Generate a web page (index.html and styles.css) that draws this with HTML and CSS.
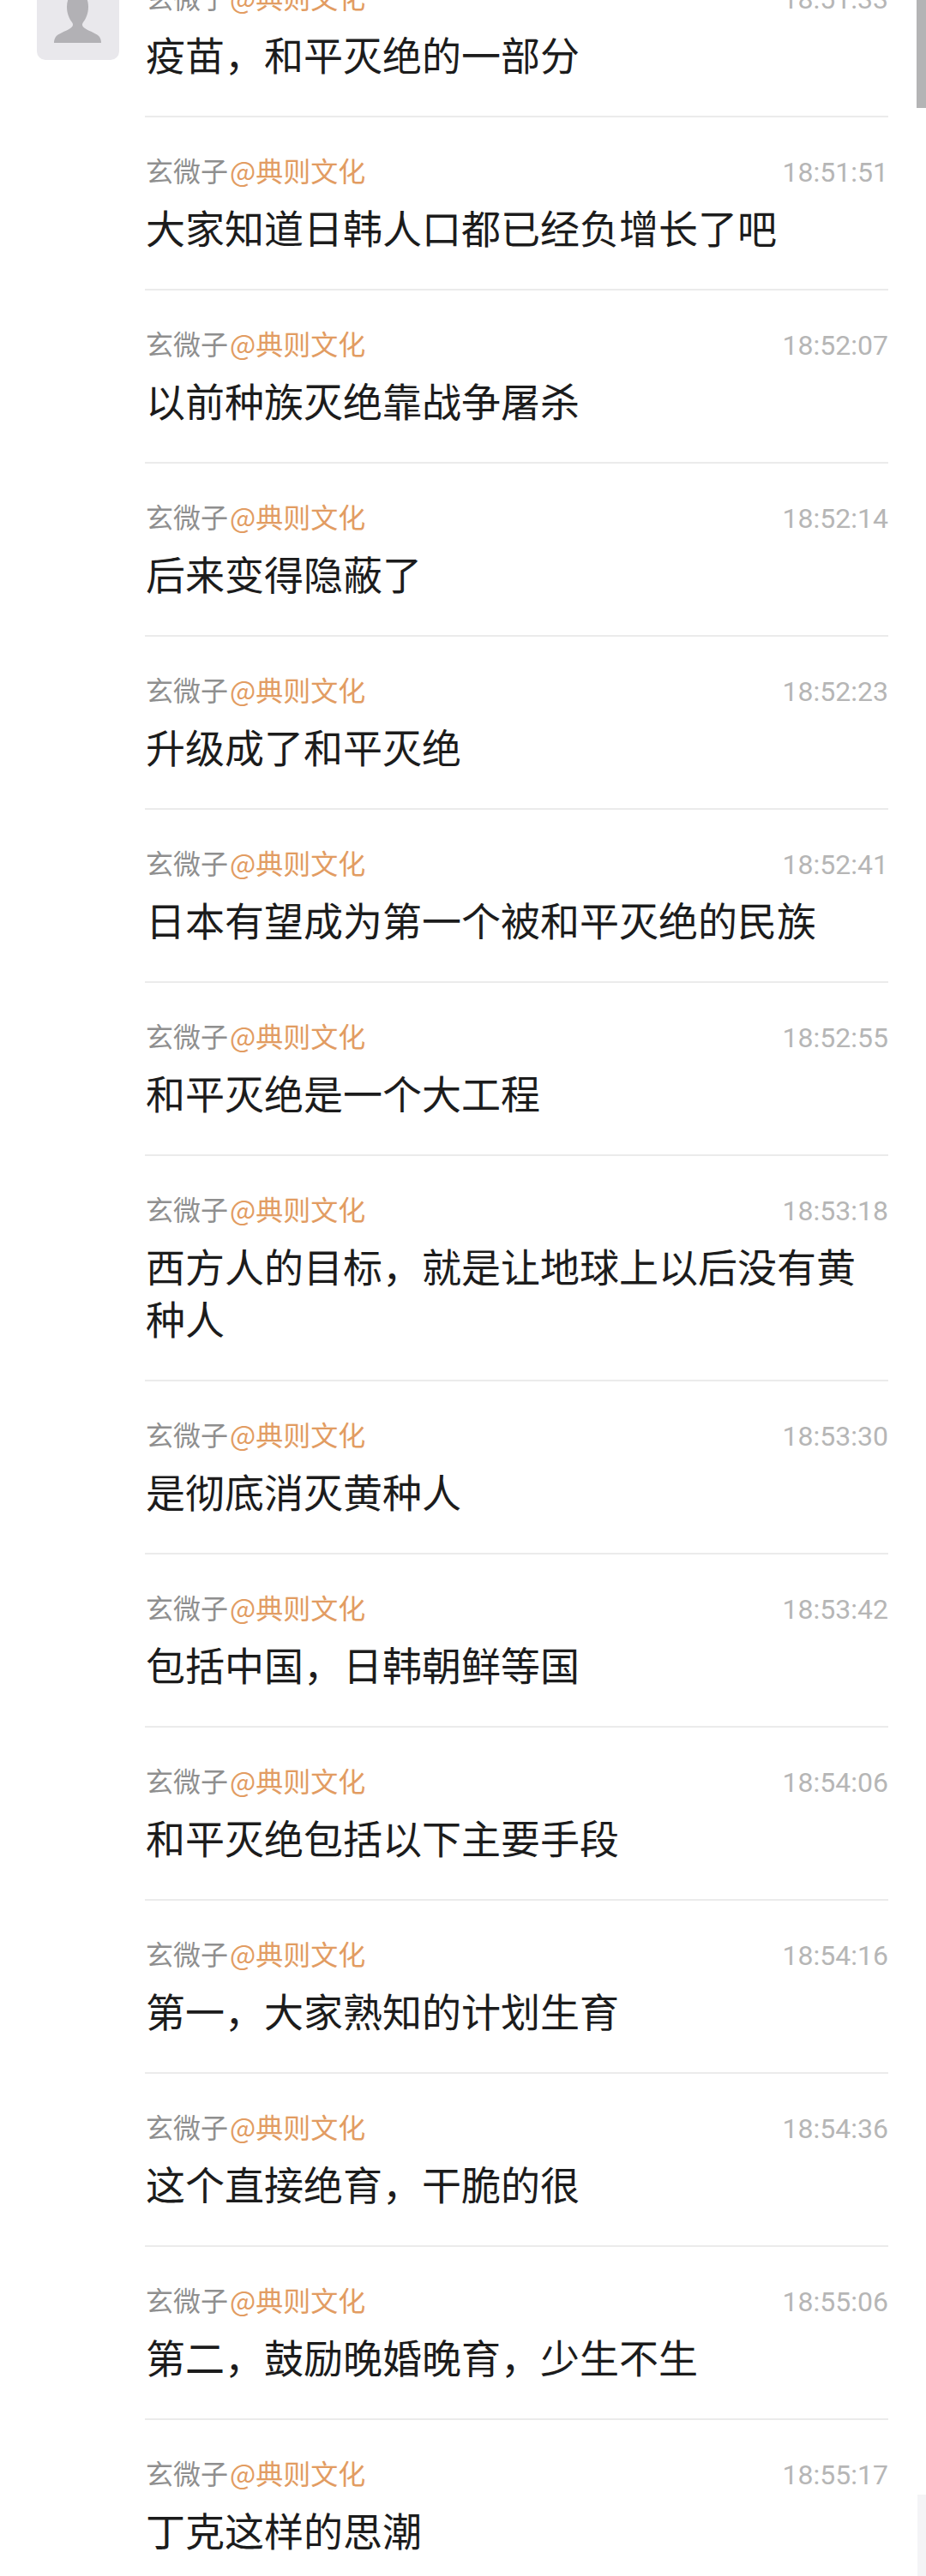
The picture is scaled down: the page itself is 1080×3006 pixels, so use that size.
FILE: index.html
```html
<!DOCTYPE html>
<html lang="zh-CN">
<head>
    <meta charset="UTF-8">
    <meta name="viewport" content="width=device-width, initial-scale=1.0">
    <title>典则文化</title>
    <link rel="stylesheet" href="styles.css">
</head>
<body>

    <div class="thread">
        <div class="avatar">
            <svg viewBox="0 0 96 96" width="96" height="96">
                <path fill="#b2b1b5" d="M47.5 16C55 16 60 24 60 34C60 42 57 48 54 52C52 55 53 57 56 59C62 63 70 65 73 69C74.5 71 75 74 75 76H20C20 74 20.5 71 22 69C25 65 33 63 39 59C42 57 43 55 41 52C38 48 35 42 35 34C35 24 40 16 47.5 16Z"/>
            </svg>
        </div>

        <div class="messages">
            <div class="message">
                <div class="message-head">
                    <span class="sender">玄微子<span class="mention">@典则文化</span></span>
                    <span class="time">18:51:33</span>
                </div>
                <p class="message-text">疫苗，和平灭绝的一部分</p>
            </div>
            <div class="message">
                <div class="message-head">
                    <span class="sender">玄微子<span class="mention">@典则文化</span></span>
                    <span class="time">18:51:51</span>
                </div>
                <p class="message-text">大家知道日韩人口都已经负增长了吧</p>
            </div>
            <div class="message">
                <div class="message-head">
                    <span class="sender">玄微子<span class="mention">@典则文化</span></span>
                    <span class="time">18:52:07</span>
                </div>
                <p class="message-text">以前种族灭绝靠战争屠杀</p>
            </div>
            <div class="message">
                <div class="message-head">
                    <span class="sender">玄微子<span class="mention">@典则文化</span></span>
                    <span class="time">18:52:14</span>
                </div>
                <p class="message-text">后来变得隐蔽了</p>
            </div>
            <div class="message">
                <div class="message-head">
                    <span class="sender">玄微子<span class="mention">@典则文化</span></span>
                    <span class="time">18:52:23</span>
                </div>
                <p class="message-text">升级成了和平灭绝</p>
            </div>
            <div class="message">
                <div class="message-head">
                    <span class="sender">玄微子<span class="mention">@典则文化</span></span>
                    <span class="time">18:52:41</span>
                </div>
                <p class="message-text">日本有望成为第一个被和平灭绝的民族</p>
            </div>
            <div class="message">
                <div class="message-head">
                    <span class="sender">玄微子<span class="mention">@典则文化</span></span>
                    <span class="time">18:52:55</span>
                </div>
                <p class="message-text">和平灭绝是一个大工程</p>
            </div>
            <div class="message">
                <div class="message-head">
                    <span class="sender">玄微子<span class="mention">@典则文化</span></span>
                    <span class="time">18:53:18</span>
                </div>
                <p class="message-text">西方人的目标，就是让地球上以后没有黄种人</p>
            </div>
            <div class="message">
                <div class="message-head">
                    <span class="sender">玄微子<span class="mention">@典则文化</span></span>
                    <span class="time">18:53:30</span>
                </div>
                <p class="message-text">是彻底消灭黄种人</p>
            </div>
            <div class="message">
                <div class="message-head">
                    <span class="sender">玄微子<span class="mention">@典则文化</span></span>
                    <span class="time">18:53:42</span>
                </div>
                <p class="message-text">包括中国，日韩朝鲜等国</p>
            </div>
            <div class="message">
                <div class="message-head">
                    <span class="sender">玄微子<span class="mention">@典则文化</span></span>
                    <span class="time">18:54:06</span>
                </div>
                <p class="message-text">和平灭绝包括以下主要手段</p>
            </div>
            <div class="message">
                <div class="message-head">
                    <span class="sender">玄微子<span class="mention">@典则文化</span></span>
                    <span class="time">18:54:16</span>
                </div>
                <p class="message-text">第一，大家熟知的计划生育</p>
            </div>
            <div class="message">
                <div class="message-head">
                    <span class="sender">玄微子<span class="mention">@典则文化</span></span>
                    <span class="time">18:54:36</span>
                </div>
                <p class="message-text">这个直接绝育，干脆的很</p>
            </div>
            <div class="message">
                <div class="message-head">
                    <span class="sender">玄微子<span class="mention">@典则文化</span></span>
                    <span class="time">18:55:06</span>
                </div>
                <p class="message-text">第二，鼓励晚婚晚育，少生不生</p>
            </div>
            <div class="message">
                <div class="message-head">
                    <span class="sender">玄微子<span class="mention">@典则文化</span></span>
                    <span class="time">18:55:17</span>
                </div>
                <p class="message-text">丁克这样的思潮</p>
            </div>
        </div>
    </div>

    <!-- scrollbar pieces at the two ends of the capture -->
    <div class="scroll-thumb"></div>
    <div class="scroll-track"></div>

</body>
</html>
```

FILE: styles.css
```css
html, body {
    margin: 0;
    height: 3006px;
    overflow: hidden;
    background-color: #fff;
}

body {
    position: relative;
    font-family: "Noto Sans CJK SC", "Noto Sans", sans-serif;
}

/* the capture starts part way through the first message */
.thread {
    display: flex;
    margin-top: -65px;
    padding: 0 44px 0 43px;
}

.avatar {
    flex: none;
    width: 96px;
    height: 96px;
    margin: 39px 30px 0 0;
    border-radius: 10px;
    background-color: #e9e8ec;
    overflow: hidden;
}

.avatar svg {
    display: block;
}

.messages {
    flex: 1;
    min-width: 0;
}

.message {
    padding: 41px 0 42px 1px;
    border-bottom: 2px solid #ebebeb;
}

.message-head {
    display: flex;
    justify-content: space-between;
    align-items: center;
    height: 40px;
    margin-bottom: 16px;
}

.sender {
    font-size: 32px;
    line-height: 40px;
    color: #8f8f8f;
}

.mention {
    color: #e29c62;
    margin-left: 2px;
}

.time {
    margin-top: 6px;
    font-family: Roboto, sans-serif;
    font-size: 32px;
    color: #b6b6b6;
}

.message-text {
    margin: 0;
    font-size: 46px;
    line-height: 61px;
    color: #1c1c1c;
}

.scroll-thumb {
    position: absolute;
    top: 0;
    right: 0;
    width: 11px;
    height: 126px;
    background-color: #b4b4b5;
}

.scroll-track {
    position: absolute;
    top: 2911px;
    right: 0;
    width: 10px;
    height: 95px;
    background-color: #f4f4f6;
}
```
